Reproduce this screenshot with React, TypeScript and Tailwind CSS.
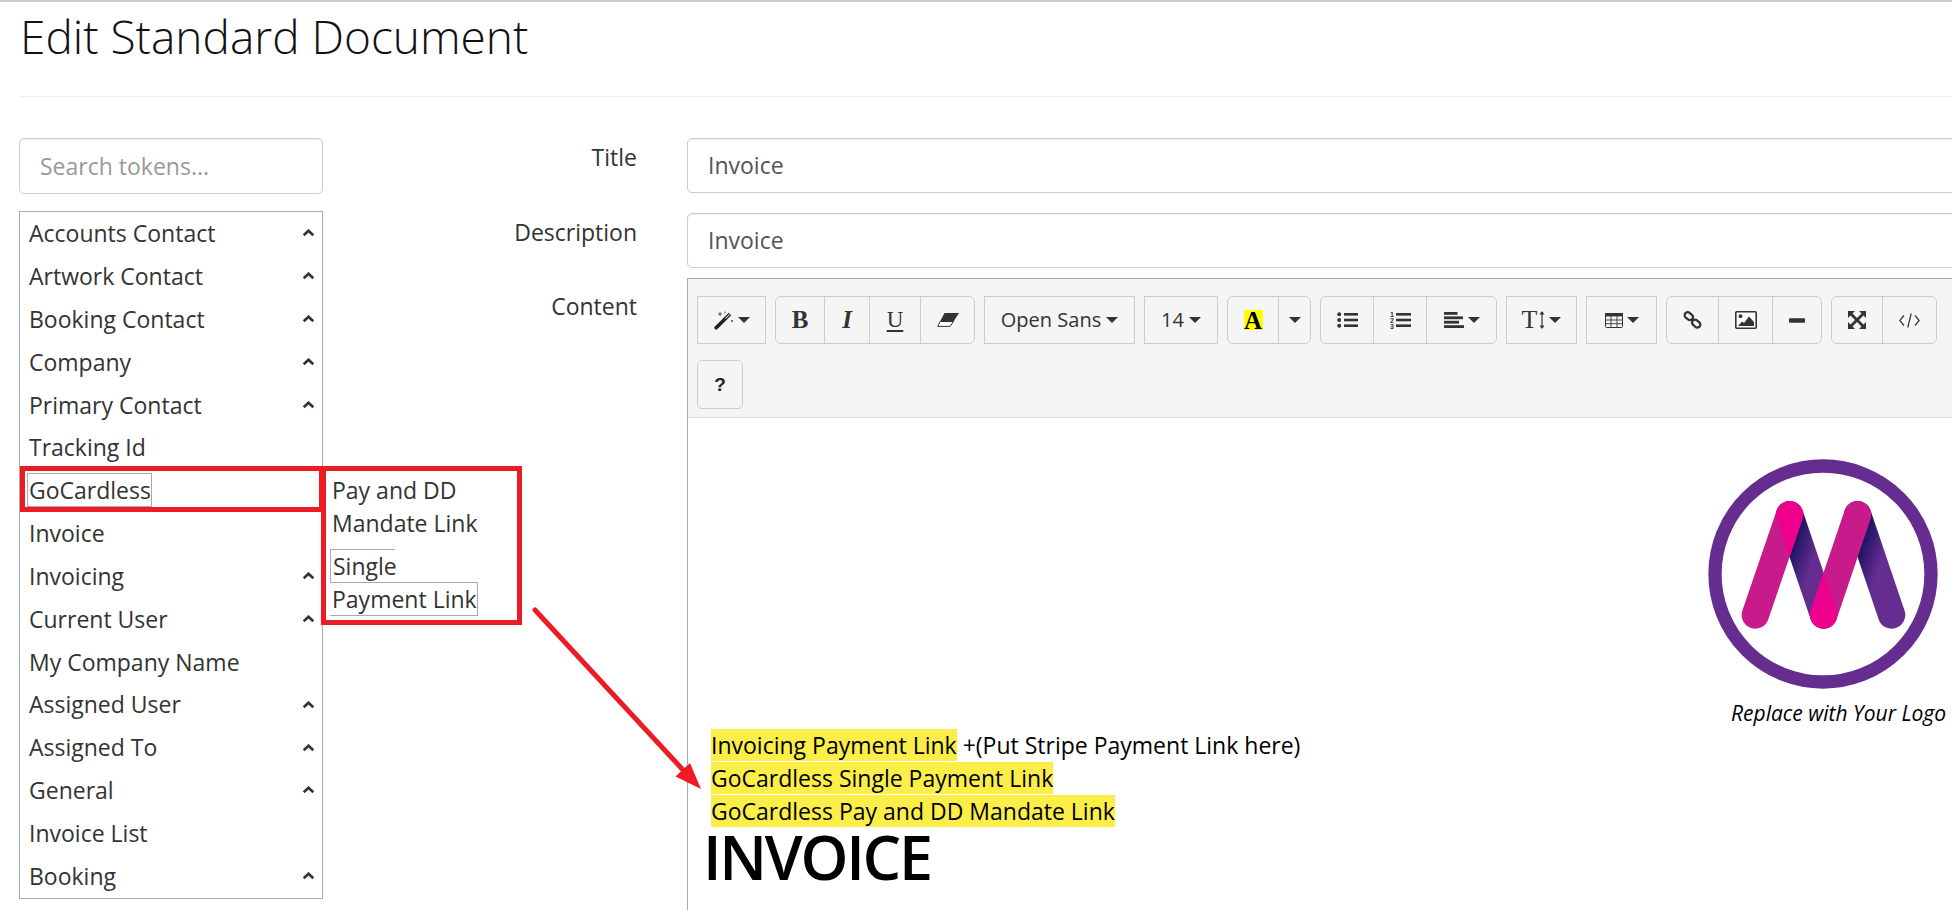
import React from "react";

const Caret = ({ ml = 5 }: { ml?: number }) => (
  <span style={{ marginLeft: ml }} className="inline-block border-t-[6px] border-x-[6px] border-x-transparent border-t-[#333]" />
);

const rows: [string, boolean][] = [
  ["Accounts Contact", true], ["Artwork Contact", true], ["Booking Contact", true], ["Company", true],
  ["Primary Contact", true], ["Tracking Id", false], ["GoCardless", false], ["Invoice", false],
  ["Invoicing", true], ["Current User", true], ["My Company Name", false], ["Assigned User", true],
  ["Assigned To", true], ["General", true], ["Invoice List", false], ["Booking", true],
];

const Chevron = () => (
  <svg width="13" height="8" viewBox="0 0 13 8" className="shrink-0">
    <path d="M1.7 6.3 6.5 1.7l4.8 4.6" fill="none" stroke="#333" strokeWidth="2.6" />
  </svg>
);

function Group({ items }: { items: { w: number; c: React.ReactNode }[] }) {
  return (
    <div className="flex h-[48px] rounded-[6px] border border-[#ccc]">
      {items.map((it, i) => (
        <div key={i} style={{ width: it.w }} className={"flex items-center justify-center text-[#333] " + (i ? "border-l border-[#ccc]" : "")}>
          {it.c}
        </div>
      ))}
    </div>
  );
}

function Square({ w, children }: { w: number; children: React.ReactNode }) {
  return (
    <div style={{ width: w }} className="flex h-[48px] items-center justify-center border border-[#ccc] text-[#333]">
      {children}
    </div>
  );
}

const serif = "font-['Liberation_Serif',serif]";

const Magic = () => (
  <svg width="20" height="19" viewBox="0 0 20 19">
    <path d="M2.2 16.8 11 8" stroke="#222" strokeWidth="3.6" strokeLinecap="round" />
    <path d="M11 8l5-5" stroke="#333" strokeWidth="3.6" />
    <path d="M11.6 7.4l4-4" stroke="#f5f5f5" strokeWidth="1" />
    <path d="M6 1v4M4 3h4M11 0.5v2M18 9v2M17 10h2" stroke="#444" strokeWidth="0.9" />
  </svg>
);
const Eraser = () => (
  <svg width="22" height="14" viewBox="0 0 22 14">
    <polygon points="7.5,0 22,0 16.5,8.5 3,8.5" fill="#333" />
    <polygon points="3,8.5 16.5,8.5 13,13.4 0.7,13.4" fill="#fff" stroke="#333" strokeWidth="1" />
  </svg>
);
const Ul = () => (
  <svg width="21" height="16" viewBox="0 0 21 16" fill="#333">
    <circle cx="2.2" cy="2.3" r="2" /><circle cx="2.2" cy="8" r="2" /><circle cx="2.2" cy="13.7" r="2" />
    <rect x="7" y="1" width="14" height="2.6" /><rect x="7" y="6.7" width="14" height="2.6" /><rect x="7" y="12.4" width="14" height="2.6" />
  </svg>
);
const Ol = () => (
  <svg width="21" height="18" viewBox="0 0 21 18" fill="#333">
    <text x="0" y="6" fontSize="7" fontWeight="700" fontFamily="Liberation Sans, sans-serif">1</text>
    <text x="0" y="12" fontSize="7" fontWeight="700" fontFamily="Liberation Sans, sans-serif">2</text>
    <text x="0" y="18" fontSize="7" fontWeight="700" fontFamily="Liberation Sans, sans-serif">3</text>
    <rect x="6" y="2" width="15" height="2.6" /><rect x="6" y="7.7" width="15" height="2.6" /><rect x="6" y="13.4" width="15" height="2.6" />
  </svg>
);
const AlignLeft = () => (
  <svg width="20" height="16" viewBox="0 0 20 16" fill="#333">
    <rect width="13.5" height="2.8" /><rect y="4.4" width="19" height="2.8" /><rect y="8.8" width="15" height="2.8" /><rect y="13.2" width="20" height="2.8" />
  </svg>
);
const HeightArrow = () => (
  <svg width="6" height="18" viewBox="0 0 6 18" fill="#333">
    <rect x="2.4" y="1" width="1.2" height="16" /><polygon points="3,0 5.5,3.5 0.5,3.5" /><polygon points="3,18 5.5,14.5 0.5,14.5" />
  </svg>
);
const TableIcon = () => (
  <svg width="18" height="15" viewBox="0 0 18 15">
    <rect x="0.5" y="0.5" width="17" height="14" rx="1" fill="#f5f5f5" stroke="#333" />
    <rect x="0" y="0" width="18" height="3.4" fill="#333" />
    <path d="M6 3v11M12 3v11M1 7h16M1 10.7h16" stroke="#444" strokeWidth="1" />
  </svg>
);
const LinkIcon = () => (
  <svg width="19" height="18" viewBox="0 0 19 18" fill="none" stroke="#333" strokeWidth="2.3">
    <rect x="1.3" y="2.2" width="9" height="6" rx="3" transform="rotate(40 5.8 5.2)" />
    <rect x="8.7" y="9.6" width="9" height="6" rx="3" transform="rotate(40 13.2 12.6)" />
  </svg>
);
const ImageIcon = () => (
  <svg width="22" height="18" viewBox="0 0 22 18">
    <rect x="0.8" y="0.8" width="20.4" height="16.4" rx="1" fill="#fff" stroke="#333" strokeWidth="1.6" />
    <circle cx="5.5" cy="5.2" r="1.9" fill="#333" />
    <polygon points="3,15 7,10.5 9,12 14,5.5 19,11 19,15" fill="#333" />
  </svg>
);
const Minus = () => (
  <svg width="16" height="5" viewBox="0 0 16 5"><rect width="16" height="4.4" y="0.3" rx="0.8" fill="#333" /></svg>
);
const Expand = () => (
  <svg width="18" height="18" viewBox="0 0 18 18" fill="#333">
    <polygon points="0,0 7,0 0,7" /><polygon points="18,0 11,0 18,7" /><polygon points="0,18 7,18 0,11" /><polygon points="18,18 11,18 18,11" />
    <path d="M3 3 15 15M15 3 3 15" stroke="#333" strokeWidth="2.8" />
  </svg>
);
const Code = () => (
  <svg width="21" height="15" viewBox="0 0 21 15" fill="none" stroke="#333" strokeWidth="1.2">
    <path d="M5 2.5 0.8 7.5 5 12.5M16 2.5l4.2 5L16 12.5M12.2 0.5 8.8 14.5" />
  </svg>
);
const Question = () => <span className="font-['Liberation_Sans',sans-serif] text-[19px] font-bold leading-none text-[#222]">?</span>;

function Logo() {
  return (
    <svg width="234" height="234" viewBox="0 0 234 234" className="block">
      <defs>
        <linearGradient id="g1" gradientUnits="userSpaceOnUse" x1="91" y1="77" x2="113.7" y2="84.8">
          <stop offset="0" stopColor="#1b1464" />
          <stop offset="1" stopColor="#652d90" />
        </linearGradient>
        <linearGradient id="g2" gradientUnits="userSpaceOnUse" x1="159" y1="77" x2="181.7" y2="84.8">
          <stop offset="0" stopColor="#1b1464" />
          <stop offset="1" stopColor="#652d90" />
        </linearGradient>
        <clipPath id="c2">
          <rect x="69.95" y="44.05" width="133.2" height="27.3" rx="13.65" transform="rotate(71.3 83.6 57.7)" />
        </clipPath>
      </defs>
      <circle cx="117" cy="117" r="108" fill="none" stroke="#652d90" strokeWidth="13.3" />
      <line x1="83.6" y1="57.7" x2="117.6" y2="158" stroke="url(#g1)" strokeWidth="27.3" strokeLinecap="round" />
      <line x1="151.6" y1="57.7" x2="185.6" y2="158" stroke="url(#g2)" strokeWidth="27.3" strokeLinecap="round" />
      <line x1="49.3" y1="158" x2="83.6" y2="57.7" stroke="#c71b8c" strokeWidth="27.3" strokeLinecap="round" />
      <line x1="117.6" y1="158" x2="151.6" y2="57.7" stroke="#c71b8c" strokeWidth="27.3" strokeLinecap="round" />
      <g clipPath="url(#c2)">
        <line x1="49.3" y1="158" x2="83.6" y2="57.7" stroke="#ec008c" strokeWidth="27.3" strokeLinecap="round" />
        <line x1="117.6" y1="158" x2="151.6" y2="57.7" stroke="#ec008c" strokeWidth="27.3" strokeLinecap="round" />
      </g>
    </svg>
  );
}

export default function App() {
  return (
    <div className="relative h-[910px] w-[1952px] overflow-hidden bg-white font-['Open_Sans',sans-serif] text-[23px] text-[#333]">
      <div className="h-[2px] bg-[#ccc]" />
      <h1 className="pl-[20px] pt-[9px] text-[46px] font-light leading-[50px] text-[#111]">Edit Standard Document</h1>
      <div className="ml-[19px] mt-[35px] h-px bg-[#eee]" />

      <div className="mt-[41px] flex pl-[19px]">
        <div className="w-[304px] shrink-0">
          <input placeholder="Search tokens..." className="h-[56px] w-full rounded-[5px] border border-[#ccc] px-[20px] shadow-[inset_0_1px_1px_rgba(0,0,0,.075)] placeholder:text-[#999]" />
          <div className="mt-[17px] border border-[#aaa]">
            {rows.map(([t, c]) => (
              <div key={t + c} className="flex h-[42.85px] items-center justify-between pl-[9px] pr-[7px]">
                <span className="whitespace-nowrap">{t}</span>
                {c && <Chevron />}
              </div>
            ))}
          </div>
        </div>

        <div className="w-[314px] shrink-0 text-right leading-[33px]">
          <div className="h-[75px] pt-[3px]">Title</div>
          <div className="h-[65px] pt-[3px]">Description</div>
          <div className="pt-[12px]">Content</div>
        </div>

        <div className="ml-[50px] w-[1300px] shrink-0">
          <div className="flex h-[55px] items-center rounded-[5px] border border-[#ccc] pl-[20px] text-[#555] shadow-[inset_0_1px_1px_rgba(0,0,0,.075)]">Invoice</div>
          <div className="mt-[20px] flex h-[55px] items-center rounded-[5px] border border-[#ccc] pl-[20px] text-[#555] shadow-[inset_0_1px_1px_rgba(0,0,0,.075)]">Invoice</div>
          <div className="mt-[10px] h-[640px] border border-b-0 border-[#aaa]">
            <div className="h-[139px] border-b border-[#ddd] bg-[#f5f5f5] pl-[9px] pt-[17px]">
              <div className="flex gap-[9px]">
                <Square w={69}><Magic /><Caret ml={4} /></Square>
                <Group items={[
                  { w: 48, c: <b className={serif + " text-[25px]"}>B</b> },
                  { w: 45, c: <i className={serif + " text-[25px] font-bold"}>I</i> },
                  { w: 51, c: <u className={serif + " text-[23px] decoration-[1.5px] underline-offset-[3px]"}>U</u> },
                  { w: 54, c: <Eraser /> },
                ]} />
                <Square w={151}><span className="text-[20px]">Open Sans</span><Caret /></Square>
                <Square w={74}><span className="text-[20px]">14</span><Caret /></Square>
                <Group items={[
                  { w: 50, c: <span className={serif + " flex h-[20px] w-[19px] items-center justify-center bg-[#ff0] text-[25px] font-bold leading-none text-black"}>A</span> },
                  { w: 32, c: <Caret ml={0} /> },
                ]} />
                <Group items={[
                  { w: 52, c: <Ul /> },
                  { w: 53, c: <Ol /> },
                  { w: 70, c: <><AlignLeft /><Caret ml={4} /></> },
                ]} />
                <Square w={71}><span className={serif + " text-[26px] leading-none"}>T</span><span className="ml-[2px] flex"><HeightArrow /></span><Caret ml={4} /></Square>
                <Square w={71}><TableIcon /><Caret ml={4} /></Square>
                <Group items={[
                  { w: 51, c: <LinkIcon /> },
                  { w: 54, c: <ImageIcon /> },
                  { w: 49, c: <Minus /> },
                ]} />
                <Group items={[
                  { w: 50, c: <Expand /> },
                  { w: 54, c: <Code /> },
                ]} />
              </div>
              <div className="mt-[16px] flex h-[49px] w-[46px] items-center justify-center rounded-[5px] border border-[#ccc]">
                <Question />
              </div>
            </div>
            <div className="bg-white pr-[40px] text-black">
              <div className="flex h-[311px] flex-col items-end">
                <div className="mr-[6px] mt-[39px]"><Logo /></div>
                <div className="mt-[8px] text-[21px] italic leading-[28px]">Replace with Your Logo</div>
              </div>
              <div className="pl-[23px] leading-[33px]">
                <div className="h-[33px] whitespace-nowrap"><span className="inline-block h-[32px] bg-[#fcee48] leading-[32px]">Invoicing Payment Link</span> +(Put Stripe Payment Link here)</div>
                <div className="h-[33px]"><span className="inline-block h-[32px] bg-[#fcee48] leading-[32px]">GoCardless Single Payment Link</span></div>
                <div className="h-[33px]"><span className="inline-block h-[32px] bg-[#fcee48] leading-[32px]">GoCardless Pay and DD Mandate Link</span></div>
                <div className="-ml-[8px] text-[61px] font-semibold leading-[58px] tracking-[-2.3px]">INVOICE</div>
              </div>
            </div>
          </div>
        </div>
      </div>

      {/* GoCardless outline and annotations drawn over the page */}
      <div className="absolute left-[27px] top-[473px] h-[34px] w-[125px] border border-[#aaa]" />
      <div className="absolute left-[20px] top-[466px] h-[46px] w-[304px] border-[5px] border-[#ed1c24]" />
      <div className="absolute left-[321px] top-[466px] h-[159px] w-[201px] border-[5px] border-[#ed1c24] bg-white pl-[6px] pt-[3px] leading-[33px]">
        <div className="whitespace-nowrap">Pay and DD</div>
        <div className="whitespace-nowrap">Mandate Link</div>
        <div className="-ml-[2px] mt-[9px] h-[33px] w-[65px] border-l border-t border-[#aaa] pl-[2px]">Single</div>
        <div className="-ml-[2px] h-[34px] w-[148px] whitespace-nowrap border-y border-r border-[#aaa] pl-[2px]">Payment Link</div>
      </div>
      <svg className="pointer-events-none absolute left-0 top-0" width="1952" height="910">
        <line x1="535" y1="610" x2="684" y2="771" stroke="#ed1c24" strokeWidth="5" strokeLinecap="round" />
        <polygon points="701,789 675.5,776.5 690,763" fill="#ed1c24" />
      </svg>
    </div>
  );
}
